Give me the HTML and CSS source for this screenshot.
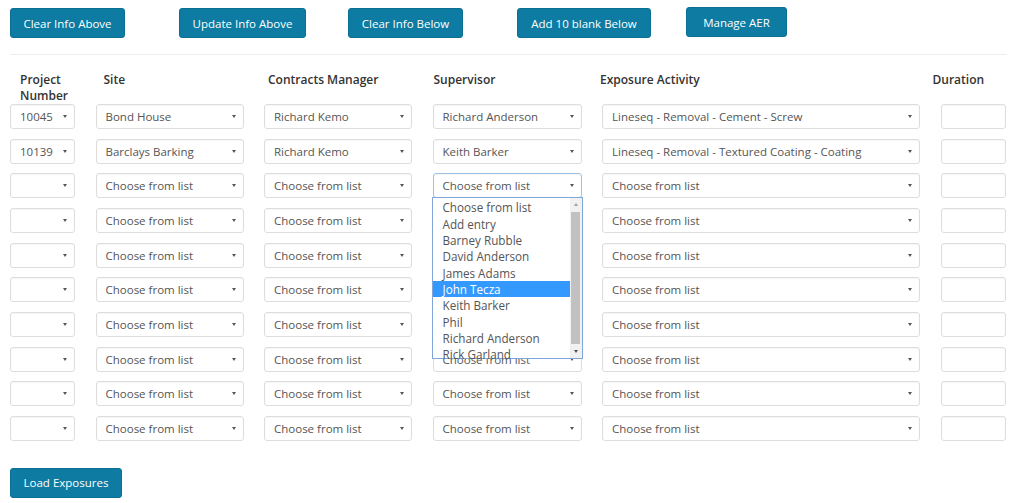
FILE: index.html
```html
<!DOCTYPE html>
<html>
<head>
<meta charset="utf-8">
<link rel="stylesheet" href="styles.css">
</head>
<body>
<div class="page">
  <div class="toolbar">
    <button class="btn b1">Clear Info Above</button>
    <button class="btn b2">Update Info Above</button>
    <button class="btn b3">Clear Info Below</button>
    <button class="btn b4">Add 10 blank Below</button>
    <button class="btn b5">Manage AER</button>
  </div>
  <div class="rule"></div>
  <div class="grid">
    <div class="hd h1">Project Number</div>
    <div class="hd h2">Site</div>
    <div class="hd h3">Contracts Manager</div>
    <div class="hd h4">Supervisor</div>
    <div class="hd h5">Exposure Activity</div>
    <div class="hd h6">Duration</div>

    <div class="sel">10045</div>
    <div class="sel">Bond House</div>
    <div class="sel">Richard Kemo</div>
    <div class="sel">Richard Anderson</div>
    <div class="sel">Lineseq - Removal - Cement - Screw</div>
    <div class="inp"></div>

    <div class="sel">10139</div>
    <div class="sel">Barclays Barking</div>
    <div class="sel">Richard Kemo</div>
    <div class="sel">Keith Barker</div>
    <div class="sel">Lineseq - Removal - Textured Coating - Coating</div>
    <div class="inp"></div>

    <div class="sel"></div>
    <div class="sel">Choose from list</div>
    <div class="sel">Choose from list</div>
    <div class="cellwrap">
      <div class="sel focus">Choose from list</div>
      <div class="dropdown">
        <div class="opts">
          <div class="opt">Choose from list</div>
          <div class="opt">Add entry</div>
          <div class="opt">Barney Rubble</div>
          <div class="opt">David Anderson</div>
          <div class="opt">James Adams</div>
          <div class="opt active">John Tecza</div>
          <div class="opt">Keith Barker</div>
          <div class="opt">Phil</div>
          <div class="opt">Richard Anderson</div>
          <div class="opt">Rick Garland</div>
        </div>
        <div class="scroll">
          <div class="arr up"></div>
          <div class="thumb"></div>
          <div class="arr down"></div>
        </div>
      </div>
    </div>
    <div class="sel">Choose from list</div>
    <div class="inp"></div>

    <div class="sel"></div><div class="sel">Choose from list</div><div class="sel">Choose from list</div><div class="sel">Choose from list</div><div class="sel">Choose from list</div><div class="inp"></div>
    <div class="sel"></div><div class="sel">Choose from list</div><div class="sel">Choose from list</div><div class="sel">Choose from list</div><div class="sel">Choose from list</div><div class="inp"></div>
    <div class="sel"></div><div class="sel">Choose from list</div><div class="sel">Choose from list</div><div class="sel">Choose from list</div><div class="sel">Choose from list</div><div class="inp"></div>
    <div class="sel"></div><div class="sel">Choose from list</div><div class="sel">Choose from list</div><div class="sel">Choose from list</div><div class="sel">Choose from list</div><div class="inp"></div>
    <div class="sel"></div><div class="sel">Choose from list</div><div class="sel">Choose from list</div><div class="sel">Choose from list</div><div class="sel">Choose from list</div><div class="inp"></div>
    <div class="sel"></div><div class="sel">Choose from list</div><div class="sel">Choose from list</div><div class="sel">Choose from list</div><div class="sel">Choose from list</div><div class="inp"></div>
    <div class="sel"></div><div class="sel">Choose from list</div><div class="sel">Choose from list</div><div class="sel">Choose from list</div><div class="sel">Choose from list</div><div class="inp"></div>
  </div>
  <div class="footer">
    <button class="btn">Load Exposures</button>
  </div>
</div>
</body>
</html>
```

FILE: styles.css
```css
* { box-sizing: border-box; }
html, body { margin: 0; padding: 0; background: #fff; }
body {
  font-family: "Open Sans", "Liberation Sans", sans-serif;
  font-size: 11.5px;
  color: #555;
}
.page { padding: 8px 10px 0 10px; width: 1024px; }
.toolbar { display: flex; align-items: flex-start; }
.btn {
  font-family: "Open Sans", "Liberation Sans", sans-serif;
  font-size: 11.5px;
  color: #fff;
  background: #0d7ba2;
  border: 1px solid #0a6f93;
  border-radius: 3px;
  height: 30px;
  padding: 0;
  white-space: nowrap;
  cursor: pointer;
}
.b1 { width: 115px; }
.b2 { width: 127px; margin-left: 54px; }
.b3 { width: 115px; margin-left: 42px; }
.b4 { width: 134px; margin-left: 54px; }
.b5 { width: 101px; margin-left: 35px; margin-top: -1px; }
.rule { height: 1px; background: #eee; margin: 16px 7px 0 0; width: 997px; }
.grid {
  display: grid;
  grid-template-columns: 65px 148px 148px 149px 318px 65px;
  column-gap: 20.5px;
  row-gap: 9.67px;
  margin-top: 15px;
}
.hd {
  font-weight: 600;
  color: #333;
  font-size: 12px;
  line-height: 16px;
  align-self: start;
  padding-top: 2px;
  margin-bottom: -9.67px;
}
.h1 { padding-left: 10px; }
.h2 { padding-left: 8px; }
.h3 { padding-left: 4px; }
.h4 { padding-left: 1px; }
.h5 { margin-left: -2px; }
.h6 { margin-left: -8px; white-space: nowrap; }
.sel, .inp {
  height: 25px;
  border: 1px solid #ddd;
  border-radius: 3px;
  background: #fff;
  box-shadow: inset 0 1px 1px rgba(0,0,0,0.04);
}
.sel {
  position: relative;
  padding: 0 18px 0 9px;
  line-height: 23px;
  white-space: nowrap;
  overflow: hidden;
  color: #555;
}
.sel::after {
  content: "";
  position: absolute;
  right: 7px;
  top: 10px;
  border-left: 2px solid transparent;
  border-right: 2px solid transparent;
  border-top: 3px solid #555;
}
.sel.focus { border-color: #9cc3e6; }
.cellwrap { position: relative; }
.dropdown {
  position: absolute;
  left: -1px;
  top: 24px;
  width: 151px;
  height: 162px;
  background: #fff;
  border: 1px solid #7fa6d6;
  display: flex;
  z-index: 5;
}
.opts { flex: 1; padding-top: 1px; }
.opt {
  height: 16.33px;
  line-height: 16.33px;
  padding-left: 10px;
  color: #555;
  white-space: nowrap;
  font-size: 11.7px;
}
.opt.active { background: #3399ff; color: #fff; }
.scroll {
  width: 12px;
  background: #f1f1f1;
  display: flex;
  flex-direction: column;
  align-items: center;
}
.arr { width: 12px; height: 13px; position: relative; }
.arr::after {
  content: "";
  position: absolute;
  left: 4px;
  border-left: 2px solid transparent;
  border-right: 2px solid transparent;
}
.arr.up::after { top: 5px; border-bottom: 3px solid #a0a0a0; }
.arr.down::after { top: 5px; border-top: 3px solid #505050; }
.thumb { width: 9px; flex: 1; background: #c1c1c1; margin: 1px 0; }
.footer { margin-top: 27px; }
.footer .btn { width: 112px; }
```
